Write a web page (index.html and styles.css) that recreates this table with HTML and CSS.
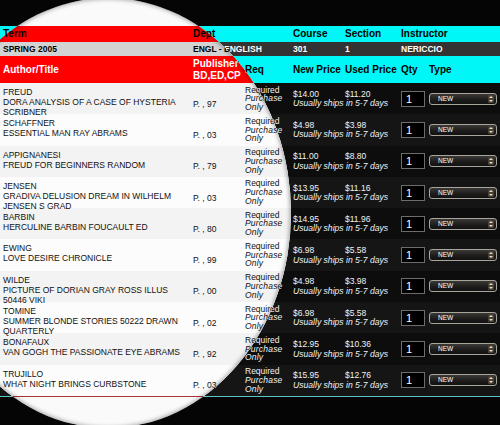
FILE: index.html
```html
<!DOCTYPE html>
<html>
<head>
<meta charset="utf-8">
<link rel="stylesheet" href="styles.css">
</head>
<body>
<div class="stage">
  <div class="sheet dark">
    <div class="row hrow">
      <div class="cell">Term</div><div class="cell span2">Dept</div><div class="cell">Course</div><div class="cell">Section</div><div class="cell span2">Instructor</div>
    </div>
    <div class="row trow">
      <div class="cell">SPRING 2005</div><div class="cell span2">ENGL - ENGLISH</div><div class="cell">301</div><div class="cell">1</div><div class="cell span2">NERICCIO</div>
    </div>
    <div class="row crow">
      <div class="cell">Author/Title</div><div class="cell">Publisher<br>BD,ED,CP</div><div class="cell">Req</div><div class="cell">New Price</div><div class="cell">Used Price</div><div class="cell">Qty</div><div class="cell">Type</div>
    </div>
    <div class="items">
      <div class="row item"><div class="cell c-title">FREUD<br>DORA ANALYSIS OF A CASE OF HYSTERIA<br>SCRIBNER</div><div class="cell c-pub">P. , 97</div><div class="cell c-req">Required<br><i>Purchase<br>Only</i></div><div class="cell c-price"><div class="prices"><span>$14.00</span><span>$11.20</span></div><i>Usually ships in 5-7 days</i></div><div class="cell c-qty"><span class="qty">1</span></div><div class="cell c-type"><span class="sel">NEW<span class="arr"></span></span></div></div>
      <div class="row item"><div class="cell c-title">SCHAFFNER<br>ESSENTIAL MAN RAY ABRAMS</div><div class="cell c-pub">P. , 03</div><div class="cell c-req">Required<br><i>Purchase<br>Only</i></div><div class="cell c-price"><div class="prices"><span>$4.98</span><span>$3.98</span></div><i>Usually ships in 5-7 days</i></div><div class="cell c-qty"><span class="qty">1</span></div><div class="cell c-type"><span class="sel">NEW<span class="arr"></span></span></div></div>
      <div class="row item"><div class="cell c-title">APPIGNANESI<br>FREUD FOR BEGINNERS RANDOM</div><div class="cell c-pub">P. , 79</div><div class="cell c-req">Required<br><i>Purchase<br>Only</i></div><div class="cell c-price"><div class="prices"><span>$11.00</span><span>$8.80</span></div><i>Usually ships in 5-7 days</i></div><div class="cell c-qty"><span class="qty">1</span></div><div class="cell c-type"><span class="sel">NEW<span class="arr"></span></span></div></div>
      <div class="row item"><div class="cell c-title">JENSEN<br>GRADIVA DELUSION DREAM IN WILHELM<br>JENSEN S GRAD</div><div class="cell c-pub">P. , 03</div><div class="cell c-req">Required<br><i>Purchase<br>Only</i></div><div class="cell c-price"><div class="prices"><span>$13.95</span><span>$11.16</span></div><i>Usually ships in 5-7 days</i></div><div class="cell c-qty"><span class="qty">1</span></div><div class="cell c-type"><span class="sel">NEW<span class="arr"></span></span></div></div>
      <div class="row item"><div class="cell c-title">BARBIN<br>HERCULINE BARBIN FOUCAULT ED</div><div class="cell c-pub">P. , 80</div><div class="cell c-req">Required<br><i>Purchase<br>Only</i></div><div class="cell c-price"><div class="prices"><span>$14.95</span><span>$11.96</span></div><i>Usually ships in 5-7 days</i></div><div class="cell c-qty"><span class="qty">1</span></div><div class="cell c-type"><span class="sel">NEW<span class="arr"></span></span></div></div>
      <div class="row item"><div class="cell c-title">EWING<br>LOVE DESIRE CHRONICLE</div><div class="cell c-pub">P. , 99</div><div class="cell c-req">Required<br><i>Purchase<br>Only</i></div><div class="cell c-price"><div class="prices"><span>$6.98</span><span>$5.58</span></div><i>Usually ships in 5-7 days</i></div><div class="cell c-qty"><span class="qty">1</span></div><div class="cell c-type"><span class="sel">NEW<span class="arr"></span></span></div></div>
      <div class="row item"><div class="cell c-title">WILDE<br>PICTURE OF DORIAN GRAY ROSS ILLUS<br>50446 VIKI</div><div class="cell c-pub">P. , 00</div><div class="cell c-req">Required<br><i>Purchase<br>Only</i></div><div class="cell c-price"><div class="prices"><span>$4.98</span><span>$3.98</span></div><i>Usually ships in 5-7 days</i></div><div class="cell c-qty"><span class="qty">1</span></div><div class="cell c-type"><span class="sel">NEW<span class="arr"></span></span></div></div>
      <div class="row item"><div class="cell c-title">TOMINE<br>SUMMER BLONDE STORIES 50222 DRAWN<br>QUARTERLY</div><div class="cell c-pub">P. , 02</div><div class="cell c-req">Required<br><i>Purchase<br>Only</i></div><div class="cell c-price"><div class="prices"><span>$6.98</span><span>$5.58</span></div><i>Usually ships in 5-7 days</i></div><div class="cell c-qty"><span class="qty">1</span></div><div class="cell c-type"><span class="sel">NEW<span class="arr"></span></span></div></div>
      <div class="row item"><div class="cell c-title">BONAFAUX<br>VAN GOGH THE PASSIONATE EYE ABRAMS</div><div class="cell c-pub">P. , 92</div><div class="cell c-req">Required<br><i>Purchase<br>Only</i></div><div class="cell c-price"><div class="prices"><span>$12.95</span><span>$10.36</span></div><i>Usually ships in 5-7 days</i></div><div class="cell c-qty"><span class="qty">1</span></div><div class="cell c-type"><span class="sel">NEW<span class="arr"></span></span></div></div>
      <div class="row item"><div class="cell c-title">TRUJILLO<br>WHAT NIGHT BRINGS CURBSTONE</div><div class="cell c-pub">P. , 03</div><div class="cell c-req">Required<br><i>Purchase<br>Only</i></div><div class="cell c-price"><div class="prices"><span>$15.95</span><span>$12.76</span></div><i>Usually ships in 5-7 days</i></div><div class="cell c-qty"><span class="qty">1</span></div><div class="cell c-type"><span class="sel">NEW<span class="arr"></span></span></div></div>
    </div>
  </div>

  <div class="lens" aria-hidden="true">
  <div class="sheet light">
    <div class="row hrow">
      <div class="cell">Term</div><div class="cell span2">Dept</div>
    </div>
    <div class="row trow">
      <div class="cell">SPRING 2005</div><div class="cell span2">ENGL - ENGLISH</div>
    </div>
    <div class="row crow">
      <div class="cell">Author/Title</div><div class="cell">Publisher<br>BD,ED,CP</div><div class="cell">Req</div>
    </div>
    <div class="items">
      <div class="row item"><div class="cell c-title">FREUD<br>DORA ANALYSIS OF A CASE OF HYSTERIA<br>SCRIBNER</div><div class="cell c-pub">P. , 97</div><div class="cell c-req">Required<br><i>Purchase<br>Only</i></div></div>
      <div class="row item"><div class="cell c-title">SCHAFFNER<br>ESSENTIAL MAN RAY ABRAMS</div><div class="cell c-pub">P. , 03</div><div class="cell c-req">Required<br><i>Purchase<br>Only</i></div></div>
      <div class="row item"><div class="cell c-title">APPIGNANESI<br>FREUD FOR BEGINNERS RANDOM</div><div class="cell c-pub">P. , 79</div><div class="cell c-req">Required<br><i>Purchase<br>Only</i></div></div>
      <div class="row item"><div class="cell c-title">JENSEN<br>GRADIVA DELUSION DREAM IN WILHELM<br>JENSEN S GRAD</div><div class="cell c-pub">P. , 03</div><div class="cell c-req">Required<br><i>Purchase<br>Only</i></div></div>
      <div class="row item"><div class="cell c-title">BARBIN<br>HERCULINE BARBIN FOUCAULT ED</div><div class="cell c-pub">P. , 80</div><div class="cell c-req">Required<br><i>Purchase<br>Only</i></div></div>
      <div class="row item"><div class="cell c-title">EWING<br>LOVE DESIRE CHRONICLE</div><div class="cell c-pub">P. , 99</div><div class="cell c-req">Required<br><i>Purchase<br>Only</i></div></div>
      <div class="row item"><div class="cell c-title">WILDE<br>PICTURE OF DORIAN GRAY ROSS ILLUS<br>50446 VIKI</div><div class="cell c-pub">P. , 00</div><div class="cell c-req">Required<br><i>Purchase<br>Only</i></div></div>
      <div class="row item"><div class="cell c-title">TOMINE<br>SUMMER BLONDE STORIES 50222 DRAWN<br>QUARTERLY</div><div class="cell c-pub">P. , 02</div><div class="cell c-req">Required<br><i>Purchase<br>Only</i></div></div>
      <div class="row item"><div class="cell c-title">BONAFAUX<br>VAN GOGH THE PASSIONATE EYE ABRAMS</div><div class="cell c-pub">P. , 92</div><div class="cell c-req">Required<br><i>Purchase<br>Only</i></div></div>
      <div class="row item"><div class="cell c-title">TRUJILLO<br>WHAT NIGHT BRINGS CURBSTONE</div><div class="cell c-pub">P. , 03</div><div class="cell c-req">Required<br><i>Purchase<br>Only</i></div></div>
    </div>
  </div>
  </div>
</div>
</body>
</html>
```

FILE: styles.css
```css
html, body {
  margin: 0;
  padding: 0;
  background: #050505;
}
.stage {
  position: relative;
  width: 500px;
  height: 425px;
  overflow: hidden;
  background: #050505;
  font-family: "Liberation Sans", Arial, Helvetica, sans-serif;
}
.sheet {
  width: 500px;
  padding-top: 26px;
}
.row {
  display: grid;
  grid-template-columns: 190px 52px 48px 52px 56px 28px 74px;
}
.cell {
  padding-left: 3px;
  min-width: 0;
  white-space: nowrap;
}
.span2 { grid-column: span 2; }

.hrow {
  height: 16px;
  align-items: center;
  font-weight: bold;
  font-size: 10px;
  line-height: 12px;
}
.trow {
  height: 14px;
  align-items: center;
  font-weight: bold;
  font-size: 8.5px;
  line-height: 10px;
}
.crow {
  height: 27px;
  align-items: center;
  font-weight: bold;
  font-size: 10px;
  line-height: 12px;
}
.item {
  height: 31.3px;
  font-size: 8.5px;
  grid-template-rows: 31.3px;
}
.c-title {
  align-self: start;
  padding-top: 4px;
  line-height: 10px;
}
.c-pub {
  align-self: center;
  padding-top: 10px;
  line-height: 10px;
}
.c-req {
  align-self: center;
  line-height: 8.7px;
}
.c-req i { letter-spacing: 0.2px; }
.c-price {
  grid-column: span 2;
  align-self: center;
  line-height: 9.5px;
  padding-top: 1px;
}
.prices { display: flex; }
.prices span:first-child { width: 52px; }
.c-price i { font-size: 8.6px; }
.c-qty, .c-type {
  align-self: center;
  display: flex;
}
.qty {
  box-sizing: border-box;
  width: 24px;
  height: 16px;
  border: 1px solid #6c6c6c;
  background: #000;
  color: #fff;
  font-size: 11px;
  line-height: 14px;
  padding-left: 4px;
}
.sel {
  position: relative;
  box-sizing: border-box;
  width: 68px;
  height: 12px;
  border: 1px solid #a9a49c;
  border-radius: 3px;
  background: linear-gradient(#3b3936, #1c1b1a 60%, #121212);
  color: #fff;
  font-size: 6.5px;
  line-height: 10px;
  padding-left: 8px;
}
.arr {
  position: absolute;
  right: 2px;
  top: 1px;
  width: 6px;
  height: 8px;
  background: #4a3f33;
  border-radius: 1px;
}
.arr::before, .arr::after {
  content: "";
  position: absolute;
  left: 1px;
  border-left: 2px solid transparent;
  border-right: 2px solid transparent;
}
.arr::before { top: 1px; border-bottom: 2px solid #e8dcc8; }
.arr::after { bottom: 1px; border-top: 2px solid #e8dcc8; }

/* dark (outside lens) scheme */
.dark .hrow, .dark .crow { background: #00f7f7; color: #000; }
.dark .trow { background: #333; color: #fff; }
.dark .items { border-bottom: 1px solid #55c8c8; }
.dark .item { color: #f2f2f2; }
.dark .item:nth-child(odd) { background: #0d0d0d; }
.dark .item:nth-child(even) { background: #151515; }

/* lens */
.lens {
  position: absolute;
  left: -75px;
  top: -2px;
  width: 366px;
  height: 430px;
  border-radius: 50%;
  overflow: hidden;
  background: #fafafa;
}
.lens::after {
  content: "";
  position: absolute;
  inset: 0;
  border-radius: 50%;
  box-shadow: inset 0 0 4px 1px rgba(0, 0, 0, 0.35);
}
.lens .sheet {
  margin-left: 75px;
  padding-top: 28px;
}
.light .hrow { background: #ff0000; color: #000; }
.light .trow { background: #d3d3d3; color: #000; }
.light .crow { background: #ff0000; color: #fff; }
.light .items { border-bottom: 1px solid #a33; }
.light .item { color: #111; }
.light .item:nth-child(odd) { background: #f3f3f3; }
.light .item:nth-child(even) { background: #fcfcfc; }
```
